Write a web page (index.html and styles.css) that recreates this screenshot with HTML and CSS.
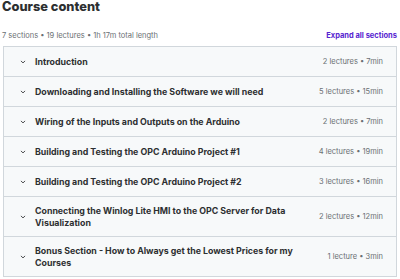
FILE: index.html
```html
<!DOCTYPE html>
<html>
<head>
<meta charset="utf-8">
<link rel="stylesheet" href="styles.css">
</head>
<body>
<div class="page">
  <h2 class="title">Course content</h2>
  <div class="meta-bar">
    <span class="stats">7 sections • 19 lectures • 1h 17m total length</span>
    <span class="expand">Expand all sections</span>
  </div>
  <div class="sections">
    <div class="row">
      <svg class="chev" viewBox="0 0 10 6"><path d="M1.5 1.2 L5 4.5 L8.5 1.2" /></svg>
      <span class="name">Introduction</span>
      <span class="info">2 lectures • 7min</span>
    </div>
    <div class="row">
      <svg class="chev" viewBox="0 0 10 6"><path d="M1.5 1.2 L5 4.5 L8.5 1.2" /></svg>
      <span class="name">Downloading and Installing the Software we will need</span>
      <span class="info">5 lectures • 15min</span>
    </div>
    <div class="row">
      <svg class="chev" viewBox="0 0 10 6"><path d="M1.5 1.2 L5 4.5 L8.5 1.2" /></svg>
      <span class="name">Wiring of the Inputs and Outputs on the Arduino</span>
      <span class="info">2 lectures • 7min</span>
    </div>
    <div class="row">
      <svg class="chev" viewBox="0 0 10 6"><path d="M1.5 1.2 L5 4.5 L8.5 1.2" /></svg>
      <span class="name">Building and Testing the OPC Arduino Project #1</span>
      <span class="info">4 lectures • 19min</span>
    </div>
    <div class="row">
      <svg class="chev" viewBox="0 0 10 6"><path d="M1.5 1.2 L5 4.5 L8.5 1.2" /></svg>
      <span class="name">Building and Testing the OPC Arduino Project #2</span>
      <span class="info">3 lectures • 16min</span>
    </div>
    <div class="row">
      <svg class="chev" viewBox="0 0 10 6"><path d="M1.5 1.2 L5 4.5 L8.5 1.2" /></svg>
      <span class="name">Connecting the Winlog Lite HMI to the OPC Server for Data Visualization</span>
      <span class="info">2 lectures • 12min</span>
    </div>
    <div class="row">
      <svg class="chev" viewBox="0 0 10 6"><path d="M1.5 1.2 L5 4.5 L8.5 1.2" /></svg>
      <span class="name">Bonus Section - How to Always get the Lowest Prices for my Courses</span>
      <span class="info">1 lecture • 3min</span>
    </div>
  </div>
</div>
</body>
</html>
```

FILE: styles.css
```css
* { box-sizing: border-box; }
html, body { margin: 0; padding: 0; background: #fff; }
body { font-family: Inter, "Liberation Sans", sans-serif; color: #2d2f31; }
.page { padding: 0 3px; width: 400px; }
.title {
  margin: 0 0 0 -1px;
  font-size: 12.8px;
  font-weight: 800;
  line-height: 13px;
}
.meta-bar {
  display: flex;
  justify-content: space-between;
  align-items: center;
  margin-top: 16px;
  height: 12px;
  margin-bottom: 5px;
}
.stats { font-size: 7.5px; color: #6a6f73; margin-left: -1px; }
.expand { font-size: 7.5px; font-weight: 700; color: #5624d0; }
.sections {
  border: 1px solid #d1d7dc;
  border-bottom: none;
  width: 394px;
}
.row {
  display: flex;
  align-items: center;
  background: #f7f9fa;
  border-bottom: 1px solid #d1d7dc;
  min-height: 30px;
  padding: 7.5px 13px 7.5px 16px;
}
.chev {
  width: 6px;
  height: 4px;
  flex: none;
  fill: none;
  stroke: #2d2f31;
  stroke-width: 1.4;
  margin-right: 9px;
}
.name {
  flex: 1;
  font-size: 8.8px;
  font-weight: 700;
  line-height: 12px;
  padding-right: 28px;
}
.info {
  font-size: 7.5px;
  color: #6a6f73;
  white-space: nowrap;
}
```
